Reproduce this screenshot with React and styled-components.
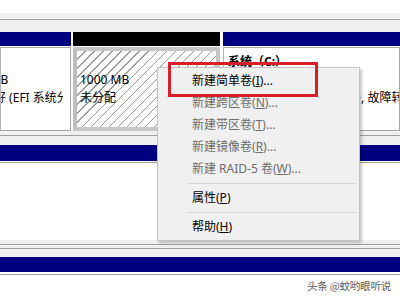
import React from "react";
import styled, { createGlobalStyle } from "styled-components";

const GlobalStyle = createGlobalStyle`
  html, body { margin: 0; padding: 0; background: #fff; }
  body {
    width: 400px; height: 300px; overflow: hidden;
    font-family: "Noto Sans", "Noto Sans CJK SC", sans-serif;
    font-size: 12px;
  }
  * { box-sizing: border-box; }
`;

const Screen = styled.div`
  position: relative;
  width: 400px;
  height: 300px;
  overflow: hidden;
  display: flex;
  flex-direction: column;
  background: #fff;
`;

const TopWhite = styled.div`
  height: 13px;
  flex-shrink: 0;
  background: #fff;
`;

const Gutter = styled.div`
  flex-shrink: 0;
  background: #f0f0f0;
  padding: ${(p) => p.$above}px 0 ${(p) => p.$below}px;
  &::before {
    content: "";
    display: block;
    height: 1px;
    background: #a0a0a0;
  }
`;

const PartitionRow = styled.div`
  flex-shrink: 0;
  height: 99px;
  display: flex;
  background: #fff;
`;

const Partition = styled.div`
  display: flex;
  flex-direction: column;
  width: ${(p) => (p.$w ? `${p.$w}px` : "auto")};
  flex: ${(p) => (p.$w ? "0 0 auto" : "1 1 auto")};
  margin-left: ${(p) => p.$ml || 0}px;
  min-width: 0;
`;

const HeaderBar = styled.div`
  height: ${(p) => p.$h || 14}px;
  flex-shrink: 0;
  background: ${(p) => p.$color};
`;

const Body = styled.div`
  flex: 1;
  margin-top: 1px;
  border: ${(p) => (p.$selected ? "4px solid #c6c6c6" : "1px solid #a8a8a8")};
  border-left-color: ${(p) => (p.$selected ? "#bdbdbd" : "#b4b4b4")};
  background: ${(p) =>
    p.$selected
      ? "repeating-linear-gradient(135deg, #ffffff 0px, #ffffff 5.4px, #9c9c9c 5.4px, #9c9c9c 6.4px)"
      : "#fff"};
  padding: ${(p) => (p.$selected ? 2 : 5)}px ${(p) => p.$pr || 0}px 0
    ${(p) => p.$pl || 0}px;
  display: flex;
  min-width: 0;
`;

const TextClip = styled.div`
  flex: 1;
  min-width: 0;
  overflow: hidden;
`;

const Line = styled.div`
  height: 18px;
  line-height: 18px;
  white-space: nowrap;
  color: #000;
  font-size: 12px;
  font-weight: ${(p) => (p.$bold ? 700 : 400)};
  margin-left: ${(p) => p.$shift || 0}px;
`;

const DiskBlock = styled.div`
  flex-shrink: 0;
  display: flex;
  flex-direction: column;
`;

const DiskBody = styled.div`
  height: 78px;
  margin-top: 1px;
  border-top: 1px solid #a0a0a0;
  background: #fff;
`;

const LowerBar = styled.div`
  flex-shrink: 0;
  height: 15px;
  background: #000080;
  margin-bottom: 2px;
`;

const Footer = styled.div`
  flex: 1;
  border-top: 1px solid #a0a0a0;
  display: flex;
  justify-content: flex-end;
  align-items: flex-start;
  padding: 4px 9px 0 0;
`;

const Watermark = styled.span`
  font-family: "Noto Sans CJK SC", sans-serif;
  font-size: 10.5px;
  line-height: 14px;
  color: #5a5a5a;
  letter-spacing: -0.2px;
`;

const Menu = styled.div`
  position: absolute;
  left: 157px;
  top: 67px;
  width: 203px;
  background: #f0f0f0;
  border: 1px solid #c4c4c4;
  box-shadow: 2px 2px 3px rgba(0, 0, 0, 0.22);
  padding: 2px;
  display: flex;
  flex-direction: column;
  z-index: 2;
`;

const MenuItem = styled.div`
  height: 22px;
  line-height: 22px;
  padding-left: 32px;
  white-space: nowrap;
  font-size: 12px;
  color: ${(p) => (p.$disabled ? "#6d6d6d" : "#000")};
  u { text-decoration: underline; text-underline-offset: 1px; }
`;

const MenuSeparator = styled.div`
  height: 1px;
  background: #d4d4d4;
  margin: 3px 1px 3px 28px;
`;

const Highlight = styled.div`
  position: absolute;
  left: 168px;
  top: 62px;
  width: 150px;
  height: 35px;
  border: 3px solid #d81f28;
  z-index: 3;
  pointer-events: none;
`;

const items = [
  { label: "新建简单卷", key: "I", disabled: false },
  { label: "新建跨区卷", key: "N", disabled: true },
  { label: "新建带区卷", key: "T", disabled: true },
  { label: "新建镜像卷", key: "R", disabled: true },
  { label: "新建 RAID-5 卷", key: "W", disabled: true },
];

export default function App() {
  return (
    <>
      <GlobalStyle />
      <Screen>
        <TopWhite />
        <Gutter $above={6} $below={12} />
        <PartitionRow>
          <Partition $w={71}>
            <HeaderBar $color="#000080" />
            <Body $pr={7}>
              <TextClip>
                <Line>&nbsp;</Line>
                <Line $shift={-35}>100 MB</Line>
                <Line $shift={-43}>状态良好 (EFI 系统分区)</Line>
              </TextClip>
            </Body>
          </Partition>
          <Partition $w={147} $ml={2}>
            <HeaderBar $color="#000" />
            <Body $selected $pl={3}>
              <TextClip>
                <Line>&nbsp;</Line>
                <Line>1000 MB</Line>
                <Line>未分配</Line>
              </TextClip>
            </Body>
          </Partition>
          <Partition $ml={3}>
            <HeaderBar $color="#000080" />
            <Body $pl={4}>
              <TextClip>
                <Line $bold>系统（C:）</Line>
                <Line>465.27 GB NTFS</Line>
                <Line>状态良好 (启动, 页面文件, 故障转储, 主分区)</Line>
              </TextClip>
            </Body>
          </Partition>
        </PartitionRow>
        <Gutter $above={4} $below={9} />
        <DiskBlock>
          <HeaderBar $color="#000080" $h={16} />
          <DiskBody />
        </DiskBlock>
        <Gutter $above={4} $below={3} />
        <Gutter $above={0} $below={8} />
        <LowerBar />
        <Footer>
          <Watermark>头条 @蚊哟眼听说</Watermark>
        </Footer>

        <Menu>
          {items.map((it) => (
            <MenuItem key={it.key} $disabled={it.disabled}>
              {it.label}(<u>{it.key}</u>)...
            </MenuItem>
          ))}
          <MenuSeparator />
          <MenuItem>
            属性(<u>P</u>)
          </MenuItem>
          <MenuSeparator />
          <MenuItem>
            帮助(<u>H</u>)
          </MenuItem>
        </Menu>
        <Highlight />
      </Screen>
    </>
  );
}
